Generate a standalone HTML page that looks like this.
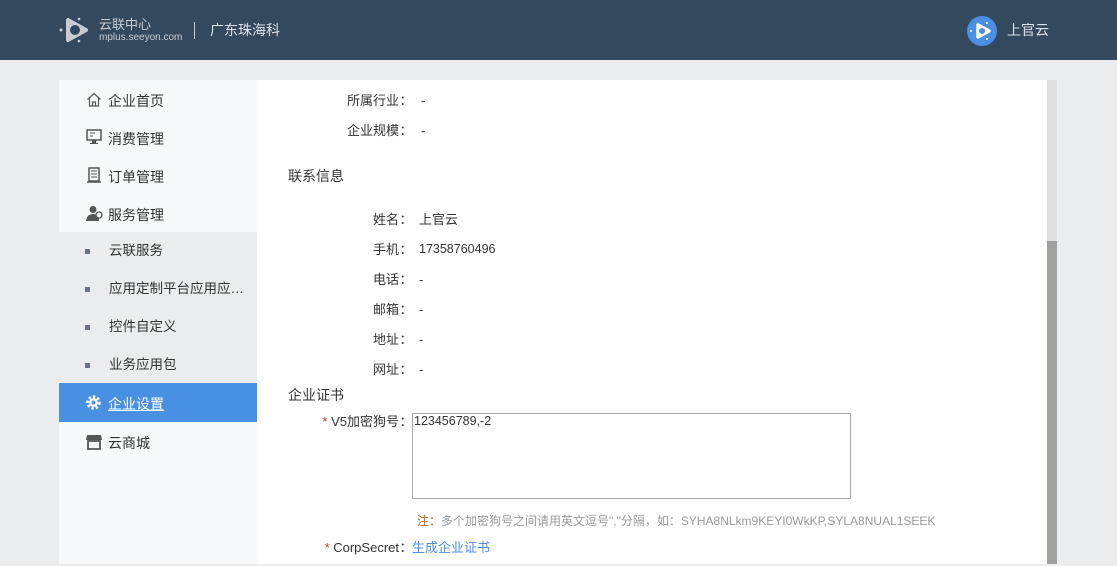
<!DOCTYPE html>
<html><head><meta charset="utf-8"><style>
*{margin:0;padding:0;box-sizing:border-box}
body{width:1117px;height:564px;overflow:hidden;background:#ebecf0;font-family:"Liberation Sans","Noto Sans CJK SC",sans-serif;font-size:13px;color:#333;position:relative;line-height:1.2}
.hd{position:absolute;left:0;top:0;width:1117px;height:60px;background:#34495e}
.abs{position:absolute;white-space:nowrap}
.side{position:absolute;left:59px;top:80px;width:198px;height:484px;background:#f7f8fa}
.sub{position:absolute;left:0;top:152px;width:198px;height:151px;background:#ebecf0}
.act{position:absolute;left:0;top:303px;width:198px;height:39px;background:#4a90e2}
.mi{position:absolute;left:49px;font-size:14px;color:#333;white-space:nowrap}
.dot{position:absolute;left:26px;width:5px;height:5px;background:#6b7280}
.main{position:absolute;left:257px;top:82px;width:790px;height:484px}
.bg{position:absolute;left:257px;top:80px;width:790px;height:484px;background:#fff}
.lab{position:absolute;text-align:right;width:120px;color:#333;white-space:nowrap}
.lab i{font-style:normal;display:inline-block;width:14px;text-align:center}
.val{position:absolute;color:#333;white-space:nowrap}
</style></head><body>
<div class="hd">
<svg class="abs" style="left:58px;top:16px" width="34" height="28" viewBox="0 0 34 28"><path d="M10 4 L28 14 L10 24 Z" fill="#c7ccd3" stroke="#c7ccd3" stroke-width="4" stroke-linejoin="round"/><circle cx="17" cy="14" r="5" fill="#34495e"/><circle cx="3" cy="14" r="1.5" fill="#c7ccd3"/><circle cx="21" cy="3" r="1.3" fill="#c7ccd3"/><circle cx="21" cy="25" r="1.3" fill="#c7ccd3"/></svg>
<div class="abs" style="left:99px;top:17px;font-size:13px;line-height:15px;color:#c7ccd3">云联中心</div>
<div class="abs" style="left:99px;top:32px;font-size:10px;line-height:12px;color:#c7ccd3">mplus.seeyon.com</div>
<div class="abs" style="left:194px;top:22px;width:1px;height:17px;background:#c7ccd3"></div>
<div class="abs" style="left:210px;top:22px;font-size:14px;color:#dde1e6">广东珠海科</div>
<svg class="abs" style="left:967px;top:16px" width="30" height="30" viewBox="0 0 30 30"><circle cx="15" cy="15" r="15" fill="#4a90e2"/><path d="M11 9 L22 15 L11 21 Z" fill="#fff" stroke="#fff" stroke-width="3.5" stroke-linejoin="round"/><circle cx="15" cy="15" r="3" fill="#4a90e2"/><circle cx="4" cy="15" r="1" fill="#fff"/><circle cx="20" cy="7" r="1" fill="#fff"/><circle cx="20" cy="23" r="1" fill="#fff"/></svg>
<div class="abs" style="left:1007px;top:22px;font-size:14px;color:#dde1e6">上官云</div>
</div>
<div class="side">
<div class="sub"></div><div class="act"></div>
<svg class="abs" style="left:27px;top:12px" width="16" height="15" viewBox="0 0 16 15"><path d="M1.5 7.5 L8 1.5 L14.5 7.5 M3.5 6 V14 H12.5 V6 M6.5 14 V10 H9.5 V14" fill="none" stroke="#555" stroke-width="1.2"/></svg>
<div class="mi" style="top:13px">企业首页</div>
<svg class="abs" style="left:27px;top:49px" width="16" height="16" viewBox="0 0 16 16"><rect x="1" y="1" width="14" height="10" fill="none" stroke="#555" stroke-width="1.5"/><path d="M4 4h5M4 7h3" stroke="#555"/><path d="M6 11v3H4v1h8v-1h-2v-3z" fill="#555"/></svg>
<div class="mi" style="top:51px">消费管理</div>
<svg class="abs" style="left:27px;top:87px" width="16" height="16" viewBox="0 0 16 16"><rect x="3" y="1" width="10" height="13" fill="none" stroke="#555" stroke-width="1.5"/><path d="M5 4h6M5 7h6M5 10h6" stroke="#555"/><path d="M1 15h14" stroke="#555" stroke-width="1.5"/></svg>
<div class="mi" style="top:89px">订单管理</div>
<svg class="abs" style="left:27px;top:125px" width="17" height="16" viewBox="0 0 17 16"><circle cx="7" cy="4.5" r="3.5" fill="#555"/><path d="M0 16 Q1 9 7 9 Q12 9 13 13 V16Z" fill="#555"/><circle cx="13" cy="10" r="3" fill="#f7f8fa" stroke="#555" stroke-width="1.3"/></svg>
<div class="mi" style="top:127px">服务管理</div>
<div class="dot" style="top:169px"></div><div class="mi" style="top:163px;left:50px;font-size:13.5px">云联服务</div>
<div class="dot" style="top:207px"></div><div class="mi" style="top:201px;left:50px;font-size:13.5px">应用定制平台应用应…</div>
<div class="dot" style="top:245px"></div><div class="mi" style="top:239px;left:50px;font-size:13.5px">控件自定义</div>
<div class="dot" style="top:283px"></div><div class="mi" style="top:277px;left:50px;font-size:13.5px">业务应用包</div>
<svg class="abs" style="left:26px;top:314px" width="17" height="17" viewBox="0 0 17 17"><circle cx="8.5" cy="8.5" r="5.5" fill="none" stroke="#fff" stroke-width="3.5" stroke-dasharray="2.2 2"/><circle cx="8.5" cy="8.5" r="4.2" fill="#fff"/><circle cx="8.5" cy="8.5" r="2" fill="#4a90e2"/></svg>
<div class="mi" style="top:316px;color:#fff;text-decoration:underline">企业设置</div>
<svg class="abs" style="left:27px;top:354px" width="16" height="16" viewBox="0 0 16 16"><path d="M1 1h14l1 5H0z" fill="#555"/><rect x="2" y="7" width="12" height="8" fill="none" stroke="#555" stroke-width="1.8"/></svg>
<div class="mi" style="top:355px">云商城</div>
</div>
<div class="bg"></div>
<div class="main">
<div class="lab" style="left:36px;top:11px">所属行业<i>：</i></div><div class="val" style="left:164px;top:11px">-</div>
<div class="lab" style="left:36px;top:41px">企业规模<i>：</i></div><div class="val" style="left:164px;top:41px">-</div>
<div class="val" style="left:31px;top:86px;font-size:14px">联系信息</div>
<div class="lab" style="left:36px;top:130px">姓名<i>：</i></div><div class="val" style="left:162px;top:130px">上官云</div>
<div class="lab" style="left:36px;top:160px">手机<i>：</i></div><div class="val" style="left:162px;top:160px;font-size:12.5px">17358760496</div>
<div class="lab" style="left:36px;top:190px">电话<i>：</i></div><div class="val" style="left:162px;top:190px">-</div>
<div class="lab" style="left:36px;top:220px">邮箱<i>：</i></div><div class="val" style="left:162px;top:220px">-</div>
<div class="lab" style="left:36px;top:250px">地址<i>：</i></div><div class="val" style="left:162px;top:250px">-</div>
<div class="lab" style="left:36px;top:280px">网址<i>：</i></div><div class="val" style="left:162px;top:280px">-</div>
<div class="val" style="left:31px;top:305px;font-size:14px">企业证书</div>
<div class="lab" style="left:36px;top:332px"><span style="color:#c0392b">*</span> V5加密狗号<i>：</i></div>
<div class="abs" style="left:155px;top:331px;width:439px;height:86px;border:1px solid #aaa;padding:0 1px;font-size:12.5px">123456789,-2</div>
<div class="val" style="left:160px;top:432px;color:#999;font-size:12px"><span style="color:#b5651d">注：</span>多个加密狗号之间请用英文逗号","分隔，如：SYHA8NLkm9KEYI0WkKP,SYLA8NUAL1SEEK</div>
<div class="lab" style="left:36px;top:458px"><span style="color:#c0392b">*</span> CorpSecret<i>：</i></div>
<div class="val" style="left:155px;top:458px;color:#4a90e2">生成企业证书</div>
</div>
<div class="abs" style="left:1047px;top:80px;width:10px;height:161px;background:#e0e0e0"></div>
<div class="abs" style="left:1047px;top:241px;width:10px;height:323px;background:#a0a09f"></div>
</body></html>
